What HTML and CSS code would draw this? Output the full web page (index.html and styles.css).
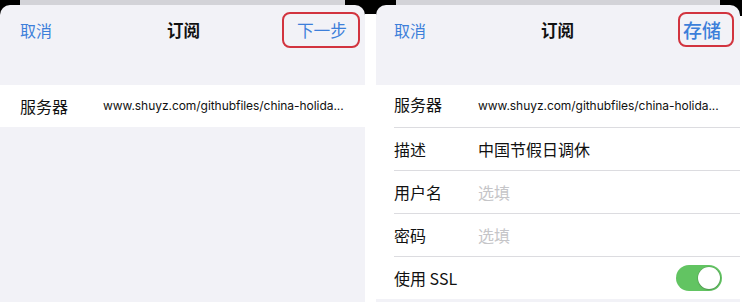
FILE: index.html
```html
<!DOCTYPE html>
<html lang="zh-CN">
<head>
<meta charset="utf-8">
<title>订阅</title>
<link rel="stylesheet" href="styles.css">
</head>
<body>
<div class="screens">
  <div class="shot shot-left">
    <div class="backcard"></div>
    <div class="sheet">
      <div class="nav">
        <span class="nav-btn nav-cancel">取消</span>
        <span class="nav-title">订阅</span>
        <span class="nav-btn nav-primary"><span class="mark mark-next">下一步</span></span>
      </div>
      <div class="group">
        <div class="row row-first">
          <span class="label">服务器</span>
          <span class="value url">www.shuyz.com/githubfiles/china-holida...</span>
        </div>
      </div>
    </div>
  </div>
  <div class="divider"></div>
  <div class="shot shot-right">
    <div class="backcard"></div>
    <div class="sheet">
      <div class="nav">
        <span class="nav-btn nav-cancel">取消</span>
        <span class="nav-title">订阅</span>
        <span class="nav-btn nav-primary"><span class="mark mark-save">存储</span></span>
      </div>
      <div class="group">
        <div class="row row-first">
          <span class="label label-high">服务器</span>
          <span class="value url">www.shuyz.com/githubfiles/china-holida...</span>
        </div>
        <div class="row">
          <span class="label">描述</span>
          <span class="value">中国节假日调休</span>
        </div>
        <div class="row">
          <span class="label">用户名</span>
          <span class="value placeholder">选填</span>
        </div>
        <div class="row">
          <span class="label">密码</span>
          <span class="value placeholder">选填</span>
        </div>
        <div class="row row-switch">
          <span class="label">使用 SSL</span>
          <span class="switch"><span class="knob"></span></span>
        </div>
      </div>
    </div>
  </div>
</div>
</body>
</html>
```

FILE: styles.css
```css
* { box-sizing: border-box; }
html, body { margin: 0; padding: 0; }
body {
  background: #fff;
  width: 742px;
  height: 302px;
  overflow: hidden;
  font-family: "Inter", "Noto Sans CJK SC", sans-serif;
  color: #111;
}
.screens {
  display: flex;
  height: 302px;
}
.shot {
  display: flex;
  flex-direction: column;
  background: linear-gradient(#000 0, #000 16px, #fff 16px);
  height: 302px;
}
.shot-left { width: 365px; }
.shot-right { width: 366px; padding-right: 2px; }
.divider {
  width: 11px;
  background: linear-gradient(#000 0, #000 14px, #fff 14px);
}
.backcard {
  height: 5px;
  margin: 0 20px;
  background: #d3d3d8;
  flex: none;
}
.sheet {
  flex: 1;
  background: #f2f2f7;
  border-radius: 10px 10px 0 0;
  overflow: hidden;
}
.nav {
  height: 50px;
  padding: 0 18px 0 20px;
  display: grid;
  grid-template-columns: 1fr auto 1fr;
  align-items: center;
  font-family: "Noto Sans CJK SC", sans-serif;
  font-size: 16px;
}
.shot-right .nav { padding: 0 19px 0 18px; }
.nav-btn { color: #3d7fda; line-height: 20px; }
.nav-primary { justify-self: end; }
.nav-title {
  font-weight: 700;
  font-size: 16.5px;
  color: #111;
  line-height: 20px;
}
.mark {
  display: inline-block;
  border: 2px solid #d2343f;
  border-radius: 8px;
}
.mark-next {
  font-size: 16.7px;
  padding: 6px 11px 6px 13px;
  margin: -8px -13px -8px -15px;
}
.mark-save {
  font-size: 19px;
  font-weight: 500;
  line-height: 22px;
  padding: 5px 11px 4px 3px;
  margin: -8px -13px -8px -5px;
}
.group {
  margin-top: 30px;
  background: #fff;
}
.row {
  height: 43px;
  display: flex;
  align-items: center;
  padding-right: 18px;
  border-top: 1px solid #dcdce0;
  margin-left: 18px;
  padding-left: 0;
}
.row-first { border-top: none; height: 42px; }
.shot-left .row { padding-left: 2px; }
.label {
  width: 84px;
  flex: none;
  font-family: "Noto Sans CJK SC", sans-serif;
  font-size: 16px;
  color: #111;
  line-height: 20px;
}
.shot-left .label { width: 83px; }
.label-high { position: relative; top: -2px; }
.value {
  font-family: "Noto Sans CJK SC", sans-serif;
  font-size: 16px;
  color: #111;
  line-height: 20px;
  white-space: nowrap;
}
.url {
  font-family: "Inter", sans-serif;
  font-size: 12px;
  letter-spacing: -0.05px;
}
.placeholder { color: #c5c5c8; }
.row-switch { justify-content: space-between; }
.switch {
  width: 46px;
  height: 26px;
  border-radius: 13px;
  background: #62c462;
  display: flex;
  align-items: center;
  justify-content: flex-end;
  padding: 2px;
}
.knob {
  width: 22px;
  height: 22px;
  border-radius: 50%;
  background: #fff;
  box-shadow: 0 0 0 0.5px rgba(0,0,0,0.15), 0 1px 2px rgba(0,0,0,0.15);
}
```
